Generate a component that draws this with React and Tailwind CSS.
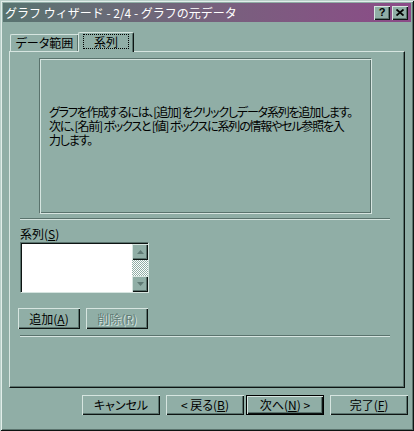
import React from 'react';

const FONT = "[font-family:'Noto_Sans_CJK_JP','Noto_Sans',sans-serif] [font-feature-settings:'palt']";

// raised 3D bevel used by buttons and the title bar controls
const RAISED = 'shadow-[inset_1px_1px_#d6e5e0,inset_-1px_-1px_#0d1412,inset_-2px_-2px_#5a736d]';
const ETCH_H = 'h-[2px] border-t border-t-[#5a736d] border-b border-b-[#d6e5e0]';

const U = ({ children }) => <span className="underline underline-offset-[1px]">{children}</span>;

const Button = ({ children, disabled, isDefault, className = '' }) => (
  <div className={`${isDefault ? 'border border-black' : ''} ${className}`}>
    <div
      className={`${RAISED} h-full w-full flex items-center justify-center bg-[#90aea6] text-[12px] leading-none ${
        disabled ? 'text-[#5f7a74] [text-shadow:1px_1px_#d6e5e0]' : 'text-black'
      }`}
    >
      {children}
    </div>
  </div>
);

const Arrow = ({ up }) => (
  <svg width="7" height="4" viewBox="0 0 7 4">
    {up ? (
      <polygon points="3.5,0 7,4 0,4" fill="#5f7a74" />
    ) : (
      <polygon points="0,0 7,0 3.5,4" fill="#5f7a74" />
    )}
  </svg>
);

const ScrollBtn = ({ up }) => (
  <div className={`${RAISED} w-[16px] h-[16px] bg-[#90aea6] flex items-center justify-center`}>
    <Arrow up={up} />
  </div>
);

export default function App() {
  return (
    <div
      className={`${FONT} w-[414px] h-[431px] bg-[#90aea6] p-[3px] flex flex-col shadow-[inset_1px_1px_#b9cfc9,inset_-1px_-1px_#0d1412,inset_2px_2px_#e2eeea,inset_-2px_-2px_#5a736d]`}
    >
      {/* Title bar */}
      <div className="h-[19px] flex items-center bg-linear-to-r from-[#587470] to-[#8c4a88] pl-[2px] pr-[3px]">
        <span className="text-white text-[12px] leading-none whitespace-nowrap [font-feature-settings:normal]">
          グラフ ウィザード - 2/4 - グラフの元データ
        </span>
        <div className="ml-auto flex gap-[2px]">
          <div className={`${RAISED} w-[16px] h-[14px] bg-[#90aea6] flex items-center justify-center`}>
            <span className="text-[11px] font-bold leading-none text-black [font-family:'Liberation_Sans',sans-serif]">?</span>
          </div>
          <div className={`${RAISED} w-[16px] h-[14px] bg-[#90aea6] flex items-center justify-center`}>
            <svg width="8" height="7" viewBox="0 0 8 7">
              <path d="M0.5 0.5 L7.5 6.5 M7.5 0.5 L0.5 6.5" stroke="#000" strokeWidth="1.8" />
            </svg>
          </div>
        </div>
      </div>

      <div className="px-[6px]">
        {/* Tabs */}
        <div className="mt-[10px] h-[19px] flex items-end pl-[1px]">
          <div className="h-[17px] w-[68px] border-t border-l border-t-[#d6e5e0] border-l-[#d6e5e0] rounded-tl-[2px] shadow-[inset_-1px_0_#5a736d] flex items-center justify-center text-[12px] leading-none text-black">
            データ範囲
          </div>
          <div className="relative z-10 -mb-[1px] h-[20px] w-[56px] bg-[#90aea6] border-t border-l border-r border-t-[#d6e5e0] border-l-[#d6e5e0] border-r-[#0d1412] rounded-t-[2px] shadow-[inset_-1px_0_#5a736d] flex items-start justify-center pt-[1px]">
            <div className="h-[15px] w-[46px] border border-dotted border-black flex items-center justify-center text-[12px] leading-none text-black">
              系列
            </div>
          </div>
        </div>

        {/* Tab panel */}
        <div className="h-[337px] border-t border-l border-t-[#d6e5e0] border-l-[#d6e5e0] border-r border-b border-r-[#0d1412] border-b-[#0d1412] shadow-[inset_-1px_-1px_#5a736d] flex flex-col">
          {/* Description frame */}
          <div className="ml-[29px] mt-[6px] w-[333px] h-[156px] border border-t-[#5a736d] border-l-[#5a736d] border-r-[#d6e5e0] border-b-[#d6e5e0] shadow-[inset_1px_1px_#d6e5e0,inset_-1px_-1px_#5a736d] pl-[9px] pt-[46px]">
            <div className="text-[12px] leading-[14px] tracking-[-1.2px] text-black whitespace-nowrap">
              <div>グラフを作成するには、[追加] をクリックしデータ系列を追加します。</div>
              <div>次に、[名前] ボックスと [値] ボックスに系列の情報やセル参照を入</div>
              <div>力します。</div>
            </div>
          </div>

          <div className={`ml-[10px] mt-[4px] w-[370px] ${ETCH_H}`} />

          {/* Series list */}
          <div className="ml-[10px] mt-[7px] h-[14px] text-[12px] leading-[14px] text-black">
            系列(<U>S</U>)
          </div>
          <div className="ml-[10px] mt-[1px] w-[129px] h-[51px] border border-t-[#5a736d] border-l-[#5a736d] border-r-[#d6e5e0] border-b-[#d6e5e0] shadow-[inset_1px_1px_#0d1412] bg-white flex justify-end pt-[1px]">
            <div className="w-[16px] flex flex-col">
              <ScrollBtn up />
              <div className="flex-1 bg-[repeating-conic-gradient(#ffffff_0%_25%,#90aea6_0%_50%)] bg-size-[2px_2px]" />
              <ScrollBtn />
            </div>
          </div>

          <div className="ml-[8px] mt-[15px] flex gap-[6px]">
            <Button className="w-[62px] h-[21px]">
              追加(<U>A</U>)
            </Button>
            <Button className="w-[62px] h-[21px]" disabled>
              削除(R)
            </Button>
          </div>

          <div className={`ml-[10px] mt-[6px] w-[370px] ${ETCH_H}`} />
        </div>
      </div>

      {/* Wizard buttons */}
      <div className="mt-[7px] pl-[79px] flex">
        <Button className="w-[78px] h-[20px]">キャンセル</Button>
        <Button className="ml-[6px] w-[78px] h-[20px]">
          &lt; 戻る(<U>B</U>)
        </Button>
        <Button className="ml-[2px] w-[78px] h-[20px]" isDefault>
          次へ(<U>N</U>) &gt;
        </Button>
        <Button className="ml-[6px] w-[78px] h-[20px]">
          完了(<U>F</U>)
        </Button>
      </div>
    </div>
  );
}
